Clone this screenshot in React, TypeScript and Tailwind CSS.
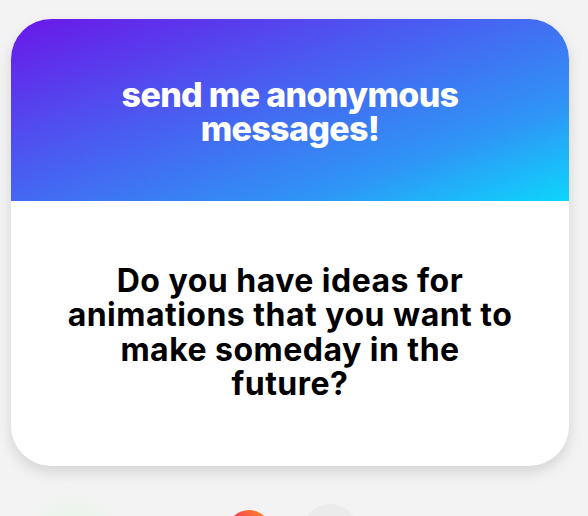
export default function App() {
  return (
    <div className="w-[588px] h-[516px] overflow-hidden bg-[#f3f3f3] pt-[19px] px-[11px] font-['Inter','Liberation_Sans',sans-serif]">
      <div className="w-[558px] h-[447px] rounded-[40px] overflow-hidden bg-white shadow-[0_6px_14px_rgba(0,0,0,0.13)] flex flex-col">
        <div className="h-[182px] bg-[linear-gradient(160deg,#6a17e8_0%,#4a5cf1_40%,#2f95f6_75%,#0dd6fb_100%)] flex items-center justify-center pt-[4px]">
          <h1 className="text-white text-center font-extrabold text-[34px] leading-[34px] tracking-[-0.02em]">
            send me anonymous
            <br />
            messages!
          </h1>
        </div>
        <div className="flex-1 flex items-center justify-center pb-[2px]">
          <p className="text-black text-center font-bold text-[32px] leading-[34.5px] tracking-[0.015em]">
            Do you have ideas for
            <br />
            animations that you want to
            <br />
            make someday in the
            <br />
            future?
          </p>
        </div>
      </div>
      <div className="flex items-center mt-[38px] -mx-[11px]">
        <div className="ml-[40px] w-[70px] h-[50px] rounded-full bg-[#e2f5e2] opacity-60 blur-[10px]" />
        <div className="ml-[117px] w-[44px] h-[44px] rounded-full bg-[linear-gradient(45deg,#e5177f_0%,#f5375a_45%,#ff9a1a_100%)]" />
        <div className="ml-[31px] w-[56px] h-[56px] rounded-full bg-[#ebebeb]" />
      </div>
    </div>
  );
}
